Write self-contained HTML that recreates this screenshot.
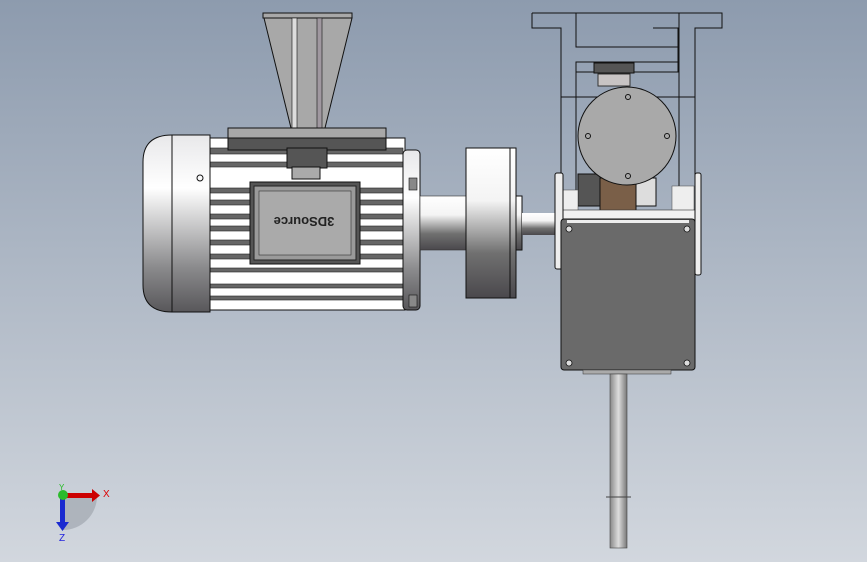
<!DOCTYPE html>
<html><head><style>html,body{margin:0;padding:0}body{width:867px;height:562px;overflow:hidden}</style></head><body>
<svg width="867" height="562" viewBox="0 0 867 562" xmlns="http://www.w3.org/2000/svg" font-family="Liberation Sans, sans-serif">
<defs>
<linearGradient id="bg" x1="0" y1="0" x2="0" y2="1"><stop offset="0" stop-color="#8d9bae"/><stop offset="1" stop-color="#d2d7de"/></linearGradient>
<linearGradient id="cyl" x1="0" y1="0" x2="0" y2="1"><stop offset="0" stop-color="#ffffff"/><stop offset="0.35" stop-color="#f4f4f4"/><stop offset="0.7" stop-color="#707070"/><stop offset="1" stop-color="#4a484c"/></linearGradient>
<linearGradient id="cap" x1="0" y1="0" x2="0" y2="1"><stop offset="0" stop-color="#e8e8ea"/><stop offset="0.3" stop-color="#ffffff"/><stop offset="0.75" stop-color="#8a8a8c"/><stop offset="1" stop-color="#58575a"/></linearGradient>
<linearGradient id="osh" x1="0" y1="0" x2="1" y2="0"><stop offset="0" stop-color="#888"/><stop offset="0.5" stop-color="#ddd"/><stop offset="1" stop-color="#777"/></linearGradient>
</defs>
<rect width="867" height="562" fill="url(#bg)"/>
<!-- hopper -->
<polygon points="264,18 352,18 325,128 291,128" fill="#a8a8a8" stroke="#111"/>
<rect x="263" y="13" width="89" height="5" fill="#a8a8a8" stroke="#111"/>
<rect x="292" y="18" width="5" height="110" fill="#ddd" stroke="#111" stroke-width="0.6"/>
<rect x="317" y="18" width="5" height="110" fill="#a098a0" stroke="#111" stroke-width="0.6"/>
<!-- motor body with fins -->
<rect x="208" y="138" width="197" height="172" fill="#fff" stroke="#111"/>
<g fill="#666" stroke="#222" stroke-width="0.6">
<rect x="210" y="148" width="193" height="6"/><rect x="210" y="162" width="193" height="5"/>
<rect x="210" y="188" width="193" height="5"/><rect x="210" y="200" width="193" height="5"/>
<rect x="210" y="214" width="193" height="5"/><rect x="210" y="226" width="193" height="5"/>
<rect x="210" y="240" width="193" height="5"/><rect x="210" y="254" width="193" height="5"/>
<rect x="210" y="268" width="193" height="4"/><rect x="210" y="284" width="193" height="4"/>
<rect x="210" y="296" width="193" height="4"/>
</g>
<!-- top plate -->
<rect x="228" y="128" width="158" height="10" fill="#a8a8a8" stroke="#111"/>
<rect x="228" y="138" width="158" height="12" fill="#555" stroke="#111"/>
<rect x="287" y="148" width="40" height="20" fill="#555" stroke="#111"/>
<rect x="292" y="167" width="28" height="12" fill="#aaa" stroke="#111"/>
<!-- terminal box -->
<rect x="250" y="182" width="110" height="82" fill="#555" stroke="#111"/>
<rect x="254" y="186" width="102" height="74" fill="#9a9a9a" stroke="#222"/>
<rect x="259" y="191" width="92" height="64" fill="#aaa" stroke="#333" stroke-width="0.6"/>
<text x="304" y="227" font-size="13" font-weight="bold" text-anchor="middle" fill="#222" transform="rotate(180 304 222)">3DSource</text>
<!-- end cap -->
<path d="M172,135 L210,135 L210,312 L172,312 Q143,312 143,285 L143,162 Q143,135 172,135Z" fill="url(#cap)" stroke="#111"/>
<line x1="172" y1="135" x2="172" y2="312" stroke="#111"/>
<circle cx="200" cy="178" r="3" fill="none" stroke="#111"/>
<!-- front flange -->
<rect x="403" y="150" width="17" height="160" rx="4" fill="url(#cap)" stroke="#111"/>
<rect x="409" y="178" width="8" height="12" fill="#888" stroke="#111" stroke-width="0.6"/>
<rect x="409" y="295" width="8" height="12" fill="#888" stroke="#111" stroke-width="0.6"/>
<!-- shaft and coupling -->
<rect x="420" y="196" width="48" height="54" fill="url(#cyl)" stroke="#333" stroke-width="0.6"/>
<rect x="512" y="196" width="10" height="54" fill="url(#cyl)" stroke="#111"/>
<rect x="466" y="148" width="50" height="150" fill="url(#cyl)" stroke="#111"/>
<line x1="510" y1="148" x2="510" y2="298" stroke="#111"/>
<rect x="522" y="213" width="36" height="22" fill="url(#cyl)"/>
<!-- frame -->
<g fill="none" stroke="#111">
<path d="M532,13 H722 V28 H695 V218 M532,13 V28 H561 V218"/>
<path d="M576,13 V47 H678"/><path d="M653,28 H678 V72 H576 V62 H678"/>
<line x1="561" y1="97" x2="695" y2="97"/><line x1="576" y1="62" x2="576" y2="218"/><line x1="679" y1="13" x2="679" y2="218"/>
</g>
<rect x="594" y="63" width="40" height="10" fill="#555" stroke="#111"/>
<rect x="598" y="74" width="32" height="12" fill="#c8c4c4" stroke="#333"/>
<!-- gears -->
<rect x="578" y="174" width="24" height="32" fill="#555" stroke="#111"/>
<rect x="600" y="178" width="36" height="40" fill="#7a5f48" stroke="#111"/>
<rect x="636" y="178" width="20" height="28" fill="#ddd" stroke="#111"/>
<rect x="562" y="190" width="16" height="28" fill="#eee" stroke="#444" stroke-width="0.5"/>
<rect x="672" y="186" width="22" height="32" fill="#eee" stroke="#444" stroke-width="0.5"/>
<rect x="561" y="210" width="134" height="10" fill="#f2f2f2" stroke="#333" stroke-width="0.6"/>
<!-- circle cover -->
<circle cx="627" cy="136" r="49" fill="#a9a9a9" stroke="#111"/>
<circle cx="628" cy="97" r="2.5" fill="none" stroke="#111"/><circle cx="628" cy="176" r="2.5" fill="none" stroke="#111"/>
<circle cx="588" cy="136" r="2.5" fill="none" stroke="#111"/><circle cx="667" cy="136" r="2.5" fill="none" stroke="#111"/>
<!-- gearbox flanges -->
<rect x="555" y="173" width="8" height="96" rx="2" fill="#eee" stroke="#111"/>
<rect x="695" y="173" width="6" height="102" rx="2" fill="#eee" stroke="#111"/>
<!-- gearbox -->
<rect x="561" y="219" width="134" height="151" rx="3" fill="#6a6a6a" stroke="#111"/>
<rect x="567" y="220" width="122" height="3" fill="#eee"/>
<g fill="#ddd" stroke="#111" stroke-width="0.8"><circle cx="569" cy="229" r="3"/><circle cx="687" cy="229" r="3"/><circle cx="569" cy="363" r="3"/><circle cx="687" cy="363" r="3"/></g>
<rect x="583" y="370" width="88" height="4" fill="#aaa" stroke="#333" stroke-width="0.5"/>
<!-- output shaft -->
<rect x="610" y="374" width="17" height="174" fill="url(#osh)" stroke="#444" stroke-width="0.6"/>
<line x1="606" y1="497" x2="631" y2="497" stroke="#444"/>
<!-- triad -->
<path d="M63,496 L63,530 A34,34 0 0 0 97,496Z" fill="#9aa0a8" opacity="0.6"/>
<rect x="63" y="493" width="30" height="5" fill="#c00"/><polygon points="92,489 100,495.5 92,502" fill="#c00"/>
<rect x="60" y="498" width="5" height="26" fill="#1a2ad0"/><polygon points="56,522 69,522 62.5,531" fill="#1a2ad0"/>
<circle cx="63" cy="495" r="5" fill="#2bbb2b"/>
<text x="103" y="497" font-size="10" fill="#d00">X</text>
<text x="59" y="541" font-size="10" fill="#22d">Z</text>
<text x="59" y="490" font-size="8" fill="#2b2">Y</text>
</svg>
</body></html>
